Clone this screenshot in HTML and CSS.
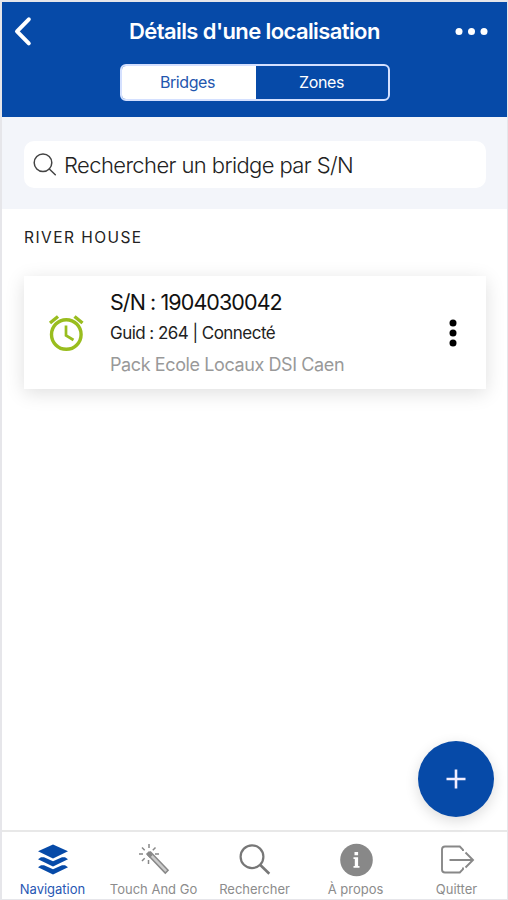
FILE: index.html
```
<!DOCTYPE html>
<html lang="fr">
<head>
<meta charset="utf-8">
<title>Détails d'une localisation</title>
<link rel="stylesheet" href="styles.css">
</head>
<body>
<div class="screen">
  <header class="header">
    <div class="titlebar">
      <svg class="back" width="20" height="32" viewBox="0 0 20 32"><path d="M15.800 4.300 4 16.300l11.800 12" fill="none" stroke="#fff" stroke-width="4" stroke-linecap="round" stroke-linejoin="round"/></svg>
      <h1 class="title"><span>Détails d'une localisation</span></h1>
      <svg class="more" width="34" height="8" viewBox="0 0 34 8" fill="#fff"><circle cx="3" cy="4.500" r="3.500"/><circle cx="15.500" cy="4.500" r="3.500"/><circle cx="28" cy="4.500" r="3.500"/></svg>
    </div>
    <div class="segments">
      <span class="segment active">Bridges</span>
      <span class="segment">Zones</span>
    </div>
  </header>
  <div class="searchbar">
    <div class="search">
      <svg width="24" height="24" viewBox="0 0 24 24" fill="none" stroke="#444" stroke-width="1.500" stroke-linecap="round"><circle cx="10" cy="9.700" r="8.800"/><path d="m16.300 16 6 5.800"/></svg>
      <span class="placeholder">Rechercher un bridge par S/N</span>
    </div>
  </div>
  <main class="content">
    <h2 class="site">RIVER HOUSE</h2>
    <article class="card">
      <svg class="clock" width="36" height="36" viewBox="0 0 36 36" fill="none" stroke="#99bd1e" stroke-width="3.400"><circle cx="18.300" cy="19.500" r="14.800"/><path d="m2 8 8-6.500M34.500 8l-8-6.500"/><path d="M18 10.500v10l7.500 4.500" stroke-width="2.700"/></svg>
      <div class="info">
        <div class="serial">S/N : 1904030042</div>
        <div class="guid">Guid : 264 | Connecté</div>
        <div class="pack">Pack Ecole Locaux DSI Caen</div>
      </div>
      <svg class="menu" width="8" height="28" viewBox="0 0 8 28" fill="#000"><circle cx="4" cy="4" r="3.500"/><circle cx="4" cy="14" r="3.500"/><circle cx="4" cy="24" r="3.500"/></svg>
    </article>
  </main>
  <button class="add" aria-label="Ajouter"><svg width="20" height="20" viewBox="0 0 20 20"><path d="M10 .5v19M.5 10h19" stroke="#f2eeff" stroke-width="2.600"/></svg></button>
  <nav class="tabs">
    <a class="tab current">
      <svg width="32" height="32" viewBox="0 0 32 32" fill="#064aa8"><path d="M16 1.500 31 8.300 16 15.500 1 8.300z"/><path d="m1 16.300 3-2h3L16 18.300l9-4h3l3 2L16 23.500zM1 24.300l3-2h3L16 26.300l9-4h3l3 2L16 31.500z"/></svg>
      <span>Navigation</span>
    </a>
    <a class="tab">
      <svg width="32" height="32" viewBox="0 0 32 32" fill="none" stroke="#888" stroke-width="1.500"><path d="m9.800 11.800 2.800-2.800 17.500 18.300-2.800 2.800z" fill="#ccc"/><path d="m9.500 9.500 3.800 3.800" stroke-width="4.500"/><path d="M11 1v4M4 4.500l2.700 2.700M1 11h4M4 18l2.700-2.700M10.500 17v4M17.500 4.500l-2.700 2.700M17 11h4"/></svg>
      <span>Touch And Go</span>
    </a>
    <a class="tab">
      <svg width="32" height="32" viewBox="0 0 32 32" fill="none" stroke="#777" stroke-width="2.200"><circle cx="13" cy="13.700" r="11.400"/><path d="m20.800 21.500 9.500 9.300" stroke-width="2.600"/></svg>
      <span>Rechercher</span>
    </a>
    <a class="tab">
      <svg width="34" height="34" viewBox="0 0 34 34"><circle cx="17.500" cy="17" r="16.300" fill="#888"/><path d="M15.500 9h3.600v3.200h-3.600zM14.500 14.200h4.600v8.800h1.400v1.800h-6V23h1.300v-7h-1.300z" fill="#fff"/></svg>
      <span>À propos</span>
    </a>
    <a class="tab">
      <svg width="34" height="32" viewBox="0 0 34 32" fill="none" stroke="#888" stroke-width="1.900"><path d="M23 8V6.800L19.800 3.500H5Q2 3.500 2 6.500v20Q2 29.500 5 29.500h14.800l3.200-3.300v-1.700"/><path d="M9.500 17h23.500M25.500 9.500l7.500 7.500-7.500 7.500"/></svg>
      <span>Quitter</span>
    </a>
  </nav>
</div>
</body>
</html>
```
FILE: styles.css
```
* { box-sizing: border-box; }
body { margin: 0; font-family: Inter, "Liberation Sans", sans-serif; background: #fff; white-space: nowrap; }
h1, h2 { margin: 0; }
svg { display: block; flex: none; overflow: visible; }
.screen { position: relative; height: 900px; display: flex; flex-direction: column; border: 2px solid #e6e6ea; border-right-width: 1px; border-bottom-width: 1px; }
.header { height: 115px; background: #064aa8; color: #fff; }
.titlebar { display: flex; align-items: center; height: 58px; padding: 0 17px 0 11px; }
.title { flex: 1; font-size: 22px; font-weight: 600; line-height: 28px; letter-spacing: -.6px; padding: 0 0 0 96px; }
.segments { display: flex; width: 270px; height: 37px; margin: 4px 0 0 118px; border: 2px solid #d4e0ff; border-radius: 6px; overflow: hidden; }
.segment { flex: 1; display: flex; align-items: center; justify-content: center; padding: 0 1px 1px 0; font-size: 16px; letter-spacing: -.4px; }
.active { background: #fff; color: #2356ae; padding-right: 3px; }
.searchbar { height: 92px; padding: 24px 21px 0 22px; background: #f3f5fa; }
.search { display: flex; align-items: center; height: 47px; padding-left: 9px; gap: 7px; background: #fff; border-radius: 10px; }
.placeholder { font-size: 22px; font-weight: 300; letter-spacing: -.6px; color: #222; }
.content { flex: 1; padding: 19px 21px 0 22px; }
.site { font-size: 15.5px; line-height: 20px; font-weight: 400; letter-spacing: 1.45px; color: #222; }
.card { display: flex; height: 113px; margin-top: 28px; padding: 0 29px 0 24px; align-items: center; background: #fff; box-shadow: 0 4px 18px rgba(0,0,0,.13); }
.info { flex: 1; padding: 2px 0 0 26px; }
.serial { font-size: 21.5px; line-height: 32px; letter-spacing: -.92px; color: #111; }
.guid { font-size: 17px; line-height: 31px; letter-spacing: -.54px; color: #222; }
.pack { font-size: 18px; line-height: 32px; letter-spacing: -.4px; color: #999; }
.add { position: absolute; left: 416px; top: 739px; width: 76px; height: 76px; padding: 0; border: 0; border-radius: 50%; background: #064aa8; display: flex; align-items: center; justify-content: center; box-shadow: 0 4px 14px rgba(0,0,0,.14); }
.tabs { display: grid; grid-template-columns: repeat(5, 1fr); height: 69px; border-top: 2px solid #e8e8e8; background: #fff; color: #8c8c8c; font-size: 13px; }
.tab { display: flex; flex-direction: column; align-items: center; justify-content: space-between; height: 67px; padding-top: 11px; line-height: 20px; }
.current { color: #2858b4; }
```
